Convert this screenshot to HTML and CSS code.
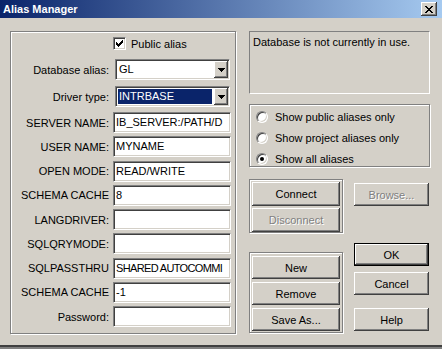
FILE: index.html
```html
<!DOCTYPE html>
<html lang="en">
<head>
  <meta charset="UTF-8">
  <meta name="viewport" content="width=device-width, initial-scale=1.0">
  <title>Alias Manager</title>
  <link rel="stylesheet" href="styles.css">
</head>
<body>
  <div class="window">
    <div class="titlebar">
      <span class="title">Alias Manager</span>
      <span class="close-btn">
        <svg width="8" height="7" viewBox="0 0 8 7" shape-rendering="crispEdges">
          <path fill="#000" d="M0 0h2v1h-2z M6 0h2v1h-2z M1 1h2v1h-2z M5 1h2v1h-2z M2 2h4v1h-4z M3 3h2v1h-2z M2 4h4v1h-4z M1 5h2v1h-2z M5 5h2v1h-2z M0 6h2v1h-2z M6 6h2v1h-2z"></path>
        </svg>
      </span>
    </div>

    <div class="client">
      <div class="group alias-group">
        <div class="form-row check-line">
          <span class="field-label"></span>
          <span class="checkbox">
            <svg width="7" height="7" viewBox="0 0 7 7" shape-rendering="crispEdges">
              <path fill="#000" d="M6 0h1v1h-1z M5 1h2v1h-2z M0 2h1v1h-1z M4 2h3v1h-3z M0 3h2v1h-2z M3 3h3v1h-3z M0 4h5v1h-5z M1 5h3v1h-3z M2 6h1v1h-1z"></path>
            </svg>
          </span>
          <span class="check-text">Public alias</span>
        </div>

        <div class="form-row combo-row first-combo">
          <span class="field-label">Database alias:</span>
          <div class="combo">
            <span class="combo-text">GL</span>
            <span class="combo-btn">
              <svg width="7" height="4" viewBox="0 0 7 4" shape-rendering="crispEdges">
                <path fill="#000" d="M0 0h7v1h-7z M1 1h5v1h-5z M2 2h3v1h-3z M3 3h1v1h-1z"></path>
              </svg>
            </span>
          </div>
        </div>

        <div class="form-row combo-row">
          <span class="field-label">Driver type:</span>
          <div class="combo">
            <span class="combo-text selected">INTRBASE</span>
            <span class="combo-btn">
              <svg width="7" height="4" viewBox="0 0 7 4" shape-rendering="crispEdges">
                <path fill="#000" d="M0 0h7v1h-7z M1 1h5v1h-5z M2 2h3v1h-3z M3 3h1v1h-1z"></path>
              </svg>
            </span>
          </div>
        </div>

        <div class="form-row first-edit">
          <span class="field-label">SERVER NAME:</span>
          <span class="edit">IB_SERVER:/PATH/D</span>
        </div>
        <div class="form-row">
          <span class="field-label">USER NAME:</span>
          <span class="edit">MYNAME</span>
        </div>
        <div class="form-row">
          <span class="field-label">OPEN MODE:</span>
          <span class="edit">READ/WRITE</span>
        </div>
        <div class="form-row">
          <span class="field-label">SCHEMA CACHE</span>
          <span class="edit">8</span>
        </div>
        <div class="form-row">
          <span class="field-label">LANGDRIVER:</span>
          <span class="edit"></span>
        </div>
        <div class="form-row">
          <span class="field-label">SQLQRYMODE:</span>
          <span class="edit"></span>
        </div>
        <div class="form-row">
          <span class="field-label">SQLPASSTHRU</span>
          <span class="edit tight">SHARED AUTOCOMMI</span>
        </div>
        <div class="form-row">
          <span class="field-label">SCHEMA CACHE</span>
          <span class="edit">-1</span>
        </div>
        <div class="form-row">
          <span class="field-label">Password:</span>
          <span class="edit"></span>
        </div>
      </div>

      <div class="right-col">
        <div class="status">Database is not currently in use.</div>

        <div class="group radio-group">
          <div class="radio-row"><span class="radio"></span>Show public aliases only</div>
          <div class="radio-row"><span class="radio"></span>Show project aliases only</div>
          <div class="radio-row"><span class="radio checked"></span>Show all aliases</div>
        </div>

        <div class="btn-row">
          <div class="group btn-group connect-group">
            <button class="btn">Connect</button>
            <button class="btn" disabled>Disconnect</button>
          </div>
          <button class="btn browse" disabled>Browse...</button>
        </div>

        <div class="btn-row second-row">
          <div class="group btn-group edit-group">
            <button class="btn">New</button>
            <button class="btn">Remove</button>
            <button class="btn">Save As...</button>
          </div>
          <div class="dialog-btns">
            <button class="btn default">OK</button>
            <button class="btn cancel">Cancel</button>
            <button class="btn help">Help</button>
          </div>
        </div>
      </div>
    </div>

    <div class="frame-bottom"></div>
  </div>
</body>
</html>
```

FILE: styles.css
```css
body {
  margin: 0;
  background: #d4d0c8;
  font-family: "Liberation Sans", Arial, sans-serif;
  font-size: 11px;
  color: #000;
  overflow: hidden;
}

.window {
  width: 442px;
  height: 349px;
  display: flex;
  flex-direction: column;
}

.titlebar {
  height: 18px;
  flex-shrink: 0;
  box-sizing: border-box;
  padding: 0 5px 0 3px;
  display: flex;
  align-items: center;
  justify-content: space-between;
  background: linear-gradient(to right, #0a246a, #a6caf0);
}

.title {
  color: #fff;
  font-weight: bold;
  font-size: 11px;
}

.close-btn {
  width: 16px;
  height: 14px;
  background: #d4d0c8;
  display: flex;
  align-items: center;
  justify-content: center;
  box-shadow: inset -1px -1px #404040, inset 1px 1px #fff, inset -2px -2px #808080;
}

.client {
  flex: 1;
  display: flex;
  align-items: flex-start;
  padding: 13px 0 0 10px;
}

/* etched frame */
.group {
  border: 1px solid #808080;
  box-shadow: 1px 1px 0 #fff, inset 1px 1px 0 #fff;
  box-sizing: border-box;
}

.alias-group {
  width: 226px;
  height: 303px;
  padding: 5px 0 0 1px;
}

.form-row {
  display: flex;
  align-items: center;
  height: 21px;
  margin-top: 3.25px;
}

.field-label {
  width: 97px;
  flex-shrink: 0;
  text-align: right;
  margin-right: 4px;
  white-space: nowrap;
}

.check-line {
  height: 13px;
  margin-top: 0;
}

.checkbox {
  width: 13px;
  height: 13px;
  box-sizing: border-box;
  background: #fff;
  border: 1px solid;
  border-color: #808080 #fff #fff #808080;
  box-shadow: inset 1px 1px #404040, inset -1px -1px #d4d0c8;
  display: flex;
  align-items: center;
  justify-content: center;
}

.check-text {
  margin-left: 5px;
}

.combo-row {
  margin-top: 6px;
}

.combo-row.first-combo {
  margin-top: 9px;
}

.combo-row .field-label {
  margin-right: 6px;
}

.first-edit {
  margin-top: 5px;
}

.combo,
.edit {
  height: 21px;
  box-sizing: border-box;
  background: #fff;
  border: 1px solid;
  border-color: #808080 #fff #fff #808080;
  box-shadow: inset 1px 1px #404040, inset -1px -1px #d4d0c8;
}

.combo {
  width: 115px;
  display: flex;
  padding: 1px;
}

.combo-text {
  flex: 1;
  margin: 1px 2px 1px 1px;
  padding-left: 1px;
  line-height: 15px;
}

.combo-text.selected {
  background: #0a246a;
  color: #fff;
}

.combo-btn {
  width: 14px;
  height: 17px;
  box-sizing: border-box;
  background: #d4d0c8;
  display: flex;
  align-items: center;
  justify-content: center;
  box-shadow: inset -1px -1px #404040, inset 1px 1px #fff, inset -2px -2px #808080;
}

.edit {
  width: 118px;
  padding: 0 1px 0 2px;
  line-height: 19px;
  white-space: nowrap;
  overflow: hidden;
}

.edit.tight {
  letter-spacing: -0.65px;
}

.right-col {
  width: 181px;
  margin-left: 13px;
  display: flex;
  flex-direction: column;
}

.status {
  height: 63px;
  box-sizing: border-box;
  padding: 4px 3px;
  border: 1px solid;
  border-color: #808080 #fff #fff #808080;
}

.radio-group {
  height: 63px;
  margin-top: 10px;
  padding: 1px 0 0 6px;
}

.radio-row {
  height: 21px;
  display: flex;
  align-items: center;
}

.radio {
  width: 12px;
  height: 12px;
  box-sizing: border-box;
  border-radius: 50%;
  margin-right: 7px;
  background: #fff;
  border: 1px solid;
  border-color: #808080 #fff #fff #808080;
  box-shadow: inset 1px 1px #404040, inset -1px -1px #d4d0c8;
  display: flex;
  align-items: center;
  justify-content: center;
}

.radio.checked::after {
  content: "";
  width: 4px;
  height: 4px;
  border-radius: 50%;
  background: #000;
}

.btn-row {
  display: flex;
  align-items: flex-start;
  margin-top: 12px;
}

.btn-group {
  width: 94px;
  display: flex;
  flex-direction: column;
  align-items: center;
}

.connect-group {
  padding: 2px 0 0;
  gap: 2px;
}

.edit-group {
  margin-top: 9px;
  padding: 3px 0 1px;
  gap: 3px;
}

.btn {
  width: 88px;
  height: 24px;
  border: none;
  padding: 0;
  margin: 0;
  background: #d4d0c8;
  font-family: inherit;
  font-size: 11px;
  color: #000;
  box-shadow: inset -1px -1px #404040, inset 1px 1px #fff, inset -2px -2px #808080;
}

.edit-group .btn {
  height: 23px;
}

.btn:disabled {
  color: #808080;
  text-shadow: 1px 1px 0 #fff;
}

.browse {
  width: 75px;
  height: 23px;
  margin: 4px 0 0 11px;
}

.second-row {
  margin-top: 10px;
}

.dialog-btns {
  margin-left: 11px;
  display: flex;
  flex-direction: column;
}

.dialog-btns .btn {
  width: 75px;
  height: 23px;
}

.btn.default {
  border: 1px solid #000;
}

.btn.cancel {
  margin-top: 6px;
}

.btn.help {
  margin-top: 13px;
}

.frame-bottom {
  height: 4px;
  flex-shrink: 0;
  box-sizing: border-box;
  border-top: 2px solid #404040;
  background: #808080;
}
```
